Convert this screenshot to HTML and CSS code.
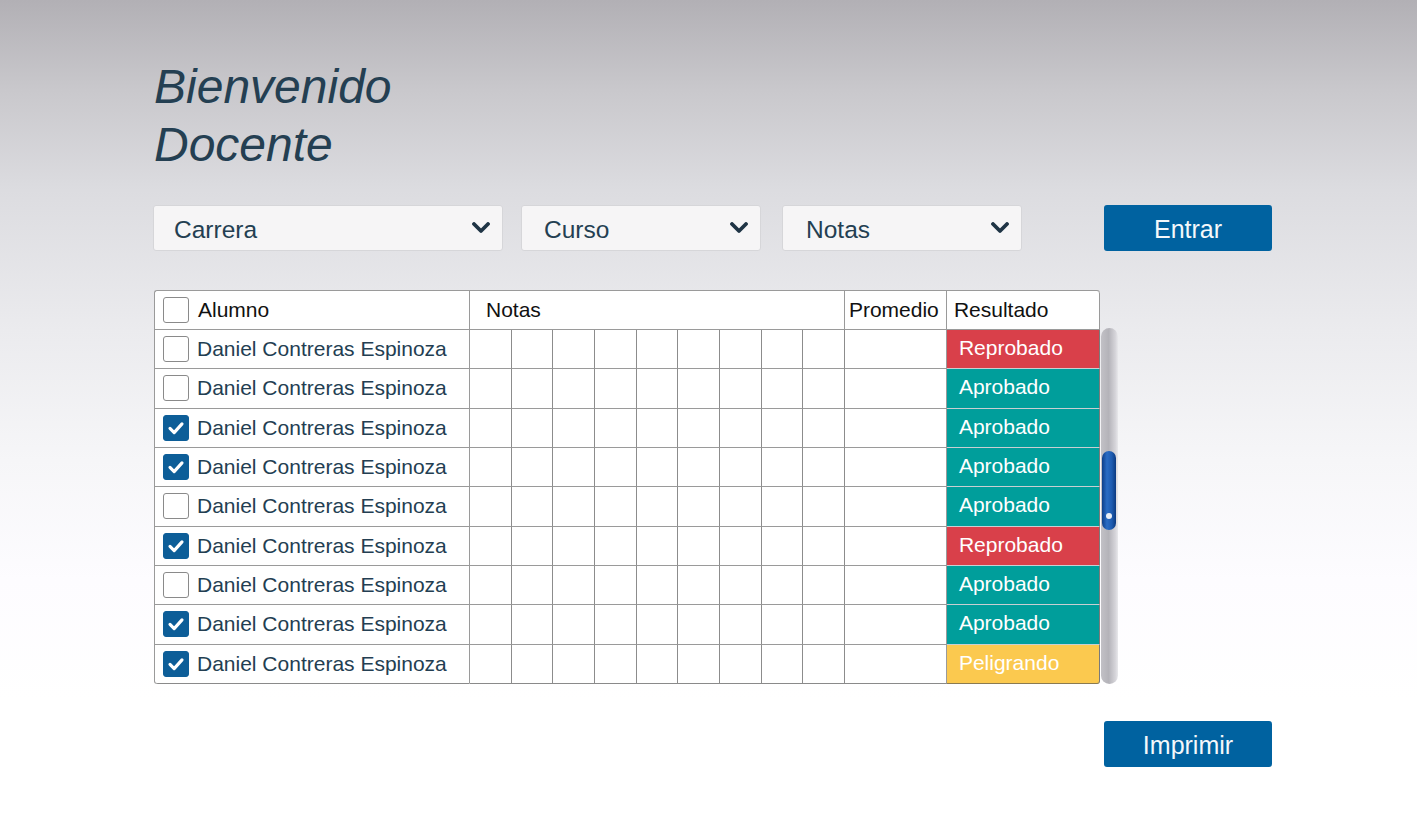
FILE: index.html
```html
<!DOCTYPE html>
<html lang="es">
<head>
<meta charset="utf-8">
<title>Bienvenido Docente</title>
<link rel="stylesheet" href="styles.css">
</head>
<body>
<main class="page">
  <h1 class="title">Bienvenido<br>Docente</h1>

  <div class="filters">
    <div class="select sel-carrera"><span>Carrera</span><svg class="chev" viewBox="0 0 18 12" width="18" height="12"><path d="M2 2 L9 9 L16 2" fill="none" stroke="#1f3445" stroke-width="3.8" stroke-linecap="round" stroke-linejoin="round"/></svg></div>
    <div class="select sel-curso"><span>Curso</span><svg class="chev" viewBox="0 0 18 12" width="18" height="12"><path d="M2 2 L9 9 L16 2" fill="none" stroke="#1f3445" stroke-width="3.8" stroke-linecap="round" stroke-linejoin="round"/></svg></div>
    <div class="select sel-notas"><span>Notas</span><svg class="chev" viewBox="0 0 18 12" width="18" height="12"><path d="M2 2 L9 9 L16 2" fill="none" stroke="#1f3445" stroke-width="3.8" stroke-linecap="round" stroke-linejoin="round"/></svg></div>
    <button class="btn btn-entrar">Entrar</button>
  </div>

  <div class="table-area">
    <div class="grid" id="grid">
      <div class="cell head c-alumno"><span class="cb"></span><span>Alumno</span></div>
      <div class="cell head c-notas">Notas</div>
      <div class="cell head c-prom">Promedio</div>
      <div class="cell head c-res">Resultado</div>
    </div>
    <div class="scroll">
      <div class="thumb"><span class="dot"></span></div>
    </div>
  </div>

  <div class="footer">
    <button class="btn">Imprimir</button>
  </div>
</main>
<script src="script.js"></script>
</body>
</html>
```

FILE: script.js
```js
const rows = [
  [false, 'Reprobado', 'red'],
  [false, 'Aprobado', 'teal'],
  [true, 'Aprobado', 'teal'],
  [true, 'Aprobado', 'teal'],
  [false, 'Aprobado', 'teal'],
  [true, 'Reprobado', 'red'],
  [false, 'Aprobado', 'teal'],
  [true, 'Aprobado', 'teal'],
  [true, 'Peligrando', 'yellow']
];
const grid = document.getElementById('grid');
const check = '<svg viewBox="0 0 26 26" width="26" height="26"><path d="M6.5 13.5 L11 18 L19.5 8.5" fill="none" stroke="#fff" stroke-width="3.4" stroke-linecap="round" stroke-linejoin="round"/></svg>';
rows.forEach((r, i) => {
  const last = i === rows.length - 1 ? ' last' : '';
  let html = '<div class="cell c-alumno' + last + '"><span class="cb' + (r[0] ? ' on' : '') + '">' + (r[0] ? check : '') + '</span><span class="name">Daniel Contreras Espinoza</span></div>';
  for (let n = 0; n < 9; n++) html += '<div class="cell nota' + last + '"></div>';
  html += '<div class="cell c-prom' + last + '"></div>';
  html += '<div class="cell res ' + r[2] + last + '">' + r[1] + '</div>';
  grid.insertAdjacentHTML('beforeend', html);
});
```

FILE: styles.css
```css
html, body {
  margin: 0;
  padding: 0;
}
body {
  min-height: 838px;
  background: linear-gradient(180deg, #b2b0b5 0px, #c9c8cc 90px, #dcdce0 190px, #ebebee 330px, #f6f6f8 460px, #fdfcff 580px, #ffffff 700px);
  font-family: "Liberation Sans", Arial, sans-serif;
  color: #233e52;
}
.page {
  padding: 58px 0 0 154px;
  width: 1119px;
}
.title {
  margin: 0;
  font-size: 48px;
  line-height: 58px;
  font-style: italic;
  font-weight: normal;
  color: #243f52;
}
.filters {
  margin-top: 31px;
  display: flex;
  align-items: center;
  height: 46px;
}
.select {
  box-sizing: border-box;
  height: 46px;
  background: #f6f5f6;
  border: 1px solid #d6d6d9;
  border-radius: 3px;
  display: flex;
  align-items: center;
  justify-content: space-between;
  padding: 3px 12px 0 20px;
  font-size: 24.5px;
  color: #243f52;
}
.select .chev { margin-top: -3px; }
.sel-carrera { width: 350px; margin-left: -1px; }
.sel-curso { width: 240px; margin-left: 18px; padding-left: 22px; }
.sel-notas { width: 240px; margin-left: 21px; padding-left: 23px; }
.chev { display: block; }
.btn {
  box-sizing: border-box;
  width: 168px;
  height: 46px;
  border: none;
  border-radius: 3px;
  background: #0062a0;
  color: #f4f8fb;
  font-family: "Liberation Sans", Arial, sans-serif;
  font-size: 25px;
  padding: 3px 0 0;
}
.btn-entrar { margin-left: 82px; }

.table-area {
  margin-top: 39px;
  display: flex;
  align-items: flex-start;
}
.grid {
  display: grid;
  grid-template-columns: 315px repeat(9, 41.67px) 102px 153px;
  grid-template-rows: 39px repeat(9, 39.33px);
  border-top: 1px solid #9a9a9a;
  border-left: 1px solid #9a9a9a;
  border-radius: 3px 3px 0 3px;
  background: #fff;
  width: 945px;
}
.cell {
  box-sizing: border-box;
  border-right: 1px solid #9a9a9a;
  border-bottom: 1px solid #9a9a9a;
  display: flex;
  align-items: center;
  font-size: 21px;
  color: #233e52;
  min-width: 0;
}
.cell.head { color: #111; font-size: 21px; }
.c-alumno { padding-left: 8px; gap: 8px; }
.cell.head.c-alumno { gap: 9px; }
.c-notas { grid-column: span 9; padding-left: 16px; }
.cell.head.c-prom { padding-left: 4px; }
.cell.head.c-res { padding-left: 7px; border-radius: 0 3px 0 0; }
.nota { border-right-color: #8c8c8c; }
.cb {
  box-sizing: border-box;
  width: 26px;
  height: 26px;
  border: 1px solid #8a8a8a;
  border-radius: 3px;
  background: #fff;
  flex: none;
  display: flex;
  align-items: center;
  justify-content: center;
}
.cb.on {
  background: #0d5e98;
  border-color: #0d5e98;
}
.cb svg { display: block; }
.name { white-space: nowrap; }
.res {
  color: #fff;
  padding-left: 12px;
  padding-bottom: 2px;
  border-bottom-color: #c8cfd2;
  border-right-color: #7a7a7a;
}
.res.red { background: #d9404a; }
.res.teal { background: #009e9b; }
.res.yellow { background: #fbc94f; }
.cell.last { border-bottom-color: #8a8a8a; }
.c-alumno.last { border-radius: 0 0 0 3px; }
.res.last { border-radius: 0 0 3px 0; border-bottom-color: #8a7a50; }
.grid { border-bottom-left-radius: 3px; }

.scroll {
  margin-top: 38px;
  margin-left: 1px;
  width: 17px;
  height: 356px;
  border-radius: 9px;
  background: linear-gradient(90deg, #c2c1c6 0%, #b4b3b9 45%, #d6d5da 85%, #e8e8eb 100%);
  position: relative;
}
.thumb {
  position: absolute;
  left: 1px;
  top: 123px;
  width: 14px;
  height: 79px;
  border-radius: 7px;
  background: linear-gradient(90deg, #0d3f8a 0%, #2a6cc4 35%, #1d5bb0 70%, #0c3a80 100%);
}
.dot {
  position: absolute;
  left: 4px;
  bottom: 11px;
  width: 6px;
  height: 6px;
  border-radius: 50%;
  background: #e9eef6;
}
.footer {
  margin-top: 37px;
  display: flex;
  justify-content: flex-end;
  width: 1118px;
}
```
